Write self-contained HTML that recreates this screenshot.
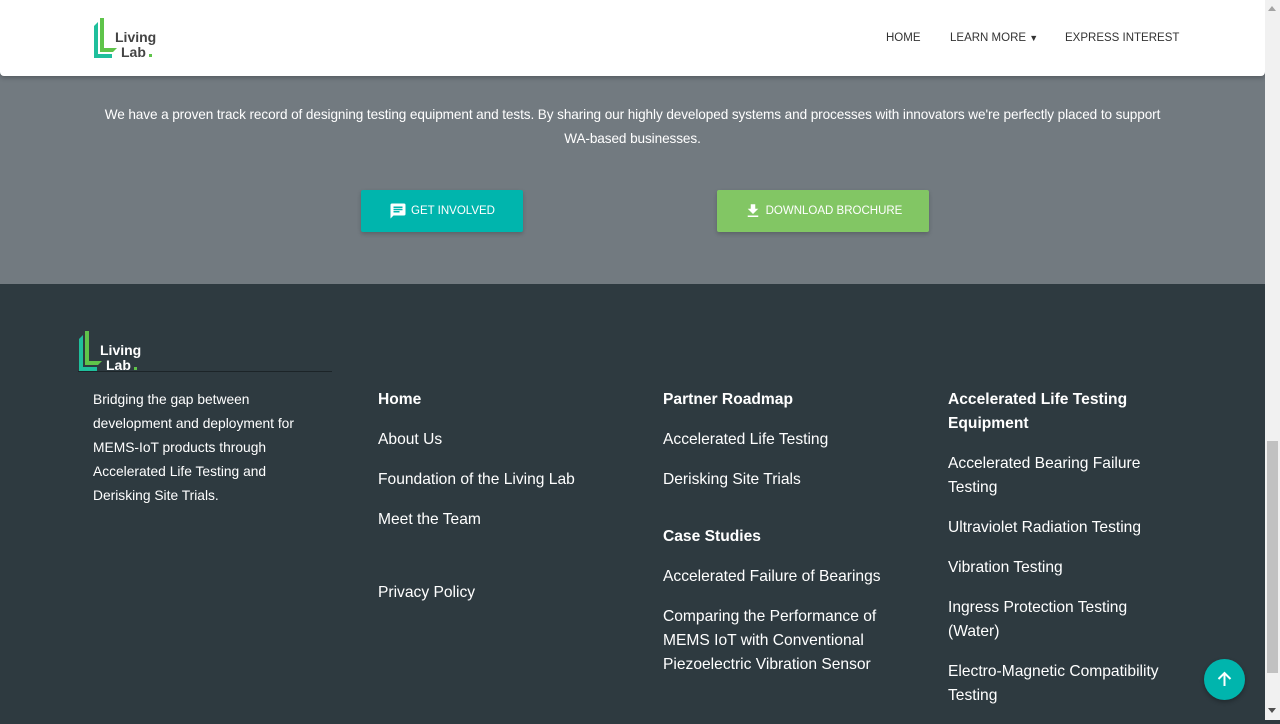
<!DOCTYPE html>
<html><head><style>
*{margin:0;padding:0;box-sizing:border-box}
body{width:1280px;height:720px;overflow:hidden;font-family:"Liberation Sans",Arial,sans-serif;background:#2e3a40;position:relative}
.gray{position:absolute;left:0;top:0;width:1265px;height:284px;background:#727a80}
.nav{position:absolute;left:0;top:0;width:1265px;height:76px;background:#fff;box-shadow:0 2px 5px rgba(0,0,0,.25);border-radius:0 0 4px 4px}
.nav a{position:absolute;top:32px;font-size:11.5px;color:#333;text-decoration:none}
.intro{position:absolute;left:86px;width:1093px;top:103px;text-align:center;color:#fff;font-size:13.6px;line-height:24px;font-weight:300;letter-spacing:-0.1px}
.btn{position:absolute;top:190px;height:42px;color:#fff;font-size:11.5px;display:flex;align-items:center;justify-content:center;border-radius:2px;box-shadow:0 2px 4px rgba(0,0,0,.2)}
.footer{position:absolute;left:0;top:284px;width:1265px;height:436px;background:#2e3a40;color:#fff}
.col{position:absolute;font-size:15.6px;line-height:24px;font-weight:300}
.col b{font-weight:bold}
.col p{margin-bottom:16px}
.sb{position:absolute;right:0;top:0;width:15px;height:720px;background:#f1f1f1}
</style></head><body>
<div class="gray"></div>
<div class="nav">
<svg style="position:absolute;left:93px;top:18px" width="66" height="42" viewBox="0 0 66 42">
<path d="M1 8 L5 4 L5 36 L19 36 L19 40 L1 40Z" fill="#1fbf9c"/>
<path d="M7 0 L11 0 L11 30 L24 30 L20 34 L7 34Z" fill="#5fc44a"/>
<text x="22" y="24" font-family="Liberation Sans" font-size="14" font-weight="bold" fill="#444">Living</text>
<text x="28" y="39" font-family="Liberation Sans" font-size="14" font-weight="bold" fill="#444">Lab</text>
<rect x="56" y="36" width="3" height="3" fill="#5fc44a"/>
</svg>
<a style="left:886px">HOME</a>
<a style="left:950px">LEARN MORE <span style="font-size:9px">▼</span></a>
<a style="left:1065px">EXPRESS INTEREST</a>
</div>
<div class="intro">We have a proven track record of designing testing equipment and tests. By sharing our highly developed systems and processes with innovators we're perfectly placed to support <span style="white-space:nowrap">WA&#8209;based</span> businesses.</div>
<div class="btn" style="left:361px;width:162px;background:#00b5ad"><svg width="18" height="18" viewBox="0 0 24 24" style="margin-right:4px"><path fill="#fff" d="M20 2H4a2 2 0 0 0-2 2v18l4-4h14a2 2 0 0 0 2-2V4a2 2 0 0 0-2-2zM6 9h12v2H6zm8 5H6v-2h8zm4-6H6V6h12z"/></svg>GET INVOLVED</div>
<div class="btn" style="left:717px;width:212px;background:#82c664"><svg width="18" height="18" viewBox="0 0 24 24" style="margin-right:4px"><path fill="#fff" d="M19 9h-4V3H9v6H5l7 7 7-7zM5 18v2h14v-2z"/></svg>DOWNLOAD BROCHURE</div>
<div class="footer">
<svg style="position:absolute;left:78px;top:47px" width="64" height="42" viewBox="0 0 64 42">
<path d="M1 8 L5 4 L5 36 L19 36 L19 40 L1 40Z" fill="#1fbf9c"/>
<path d="M7 0 L11 0 L11 30 L24 30 L20 34 L7 34Z" fill="#5fc44a"/>
<text x="22" y="24" font-family="Liberation Sans" font-size="14" font-weight="bold" fill="#fff">Living</text>
<text x="28" y="39" font-family="Liberation Sans" font-size="14" font-weight="bold" fill="#fff">Lab</text>
<rect x="56" y="36" width="3" height="3" fill="#5fc44a"/>
</svg>
<div style="position:absolute;left:78px;top:87px;width:254px;height:1px;background:#1c2428"></div>
<div class="col" style="left:93px;top:104px;width:220px;font-size:13.8px;line-height:24px">Bridging the gap between development and deployment for MEMS-IoT products through Accelerated Life Testing and Derisking Site Trials.</div>
<div class="col" style="left:378px;top:104px"><p><b>Home</b></p><p>About Us</p><p>Foundation of the Living Lab</p><p>Meet the Team</p><p style="margin-top:49px">Privacy Policy</p></div>
<div class="col" style="left:663px;top:104px;width:235px"><p><b>Partner Roadmap</b></p><p>Accelerated Life Testing</p><p>Derisking Site Trials</p><p style="margin-top:33px"><b>Case Studies</b></p><p>Accelerated Failure of Bearings</p><p>Comparing the Performance of MEMS IoT with Conventional Piezoelectric Vibration Sensor</p></div>
<div class="col" style="left:948px;top:104px;width:230px"><p><b>Accelerated Life Testing Equipment</b></p><p>Accelerated Bearing Failure Testing</p><p>Ultraviolet Radiation Testing</p><p>Vibration Testing</p><p>Ingress Protection Testing (Water)</p><p>Electro-Magnetic Compatibility Testing</p></div>
</div>
<div style="position:absolute;left:1204px;top:659px;width:41px;height:41px;border-radius:50%;background:#00b5ad;box-shadow:0 2px 5px rgba(0,0,0,.3)"><svg width="41" height="41" viewBox="0 0 41 41"><path d="M20.5 27V14M14.5 20L20.5 14L26.5 20" stroke="#fff" stroke-width="2" fill="none"/></svg></div>
<div class="sb"><div style="position:absolute;left:2px;top:441px;width:11px;height:232px;background:#c1c1c1"></div><div style="position:absolute;left:3px;top:708px;border:4px solid transparent;border-top:5px solid #505050"></div><div style="position:absolute;left:3px;top:2px;border:4px solid transparent;border-bottom:5px solid #a3a3a3"></div></div>
</body></html>
